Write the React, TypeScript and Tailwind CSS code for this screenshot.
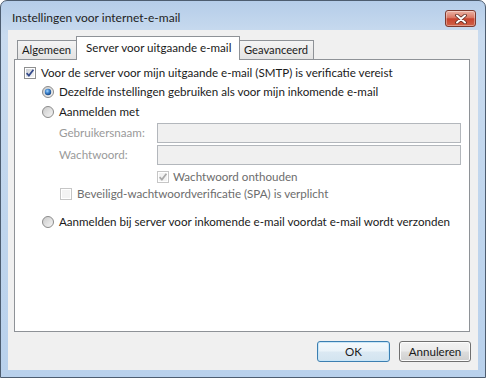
import React from "react";

function Defs() {
  return (
    <svg width="0" height="0" className="absolute">
      <defs>
        <linearGradient id="cbInner" x1="0" y1="0" x2="1" y2="1">
          <stop offset="0" stopColor="#cbcfd5" />
          <stop offset="1" stopColor="#f6f6f6" />
        </linearGradient>
        <linearGradient id="rbBg" x1="0" y1="0" x2="1" y2="1">
          <stop offset="0" stopColor="#c9c9c9" />
          <stop offset="1" stopColor="#f7f7f7" />
        </linearGradient>
        <radialGradient id="rbDot" cx="0.4" cy="0.35" r="0.7">
          <stop offset="0" stopColor="#a8d8ff" />
          <stop offset="0.45" stopColor="#3f86d0" />
          <stop offset="1" stopColor="#123d78" />
        </radialGradient>
      </defs>
    </svg>
  );
}

function CheckBox({ checked, disabled }: { checked?: boolean; disabled?: boolean }) {
  return (
    <svg width="12" height="12" viewBox="0 0 12 12" className="shrink-0">
      <rect x="0.5" y="0.5" width="11" height="11" fill="#fff" stroke={disabled ? "#c6c6c6" : "#8e8f8f"} />
      <rect x="2" y="2" width="8" height="8" fill={disabled ? "#f3f3f3" : "url(#cbInner)"} />
      {checked && (
        <path
          d="M2.6 6.2 L4.9 8.6 L9.4 2.8"
          fill="none"
          stroke={disabled ? "#a9a9a9" : "#33498a"}
          strokeWidth="1.7"
        />
      )}
    </svg>
  );
}

function Radio({ selected }: { selected?: boolean }) {
  return (
    <svg width="12" height="12" viewBox="0 0 12 12" className="shrink-0">
      <circle cx="6" cy="6" r="5.5" fill="url(#rbBg)" stroke="#8b8b8b" strokeWidth="1" />
      {selected && <circle cx="6" cy="6" r="3.2" fill="url(#rbDot)" />}
    </svg>
  );
}

export default function App() {
  return (
    <div className="w-[486px] h-[378px] bg-white font-['Lato','Noto_Sans',sans-serif] text-[11.6px] text-[#1a1a1a]">
      <Defs />
      <div className="w-[486px] h-[378px] rounded-t-[7px] border border-[#4d5d70] bg-[linear-gradient(180deg,#b5cde9_0%,#c9dbef_9%,#bfd5ed_60%,#b9d1ec_100%)] flex flex-col">
        {/* Title bar */}
        <div className="h-[29px] flex items-start justify-between">
          <div className="pl-[11px] pt-[9px] leading-[16px] text-[12px] text-[#1e1e1e]">
            Instellingen voor internet-e-mail
          </div>
          <div className="mt-[9px] mr-[9px] w-[31px] h-[17px] rounded-[3px] border border-[#7c3a2f] bg-[linear-gradient(180deg,#ecb3a5_0%,#d97763_45%,#c7432e_52%,#d06248_100%)] flex items-center justify-center shadow-[inset_0_0_0_1px_rgba(255,255,255,0.35)]">
            <svg width="12" height="10" viewBox="0 0 12 10">
              <path d="M2 1.5 L10 8.5 M10 1.5 L2 8.5" stroke="#5a2a22" strokeWidth="3.6" strokeLinecap="round" />
              <path d="M2 1.5 L10 8.5 M10 1.5 L2 8.5" stroke="#ffffff" strokeWidth="2" strokeLinecap="round" />
            </svg>
          </div>
        </div>

        {/* Client area */}
        <div className="flex-1 mx-[7px] mb-[7px] bg-[#f0f0f0] flex flex-col pt-[6px]">
          <div className="pl-[6px] pr-[8px]">
            {/* Tabs */}
            <div className="flex items-end h-[23px] relative z-10 pl-[3px] text-[11.2px]">
              <div className="w-[60px] h-[19px] border border-b-0 border-[#8e9297] bg-[linear-gradient(180deg,#f4f4f4,#e3e3e3)] pl-[4px] leading-[18px] whitespace-nowrap">
                Algemeen
              </div>
              <div className="w-[164px] h-[24px] -ml-[1px] -mb-[1px] border border-b-0 border-[#8e9297] bg-white pl-[9px] leading-[21px] text-[11.6px] whitespace-nowrap">
                Server voor uitgaande e-mail
              </div>
              <div className="w-[74px] h-[19px] border border-l-0 border-b-0 border-[#8e9297] bg-[linear-gradient(180deg,#f4f4f4,#e3e3e3)] pl-[4px] leading-[18px] whitespace-nowrap">
                Geavanceerd
              </div>
            </div>
            {/* Panel */}
            <div className="h-[273px] border border-[#8e9297] bg-white flex flex-col">
              <div className="mt-[4px] h-[18px] pl-[9px] flex items-center gap-[5px]">
                <CheckBox checked />
                <span>Voor de server voor mijn uitgaande e-mail (SMTP) is verificatie vereist</span>
              </div>
              <div className="h-[20px] pl-[27px] flex items-center gap-[5px]">
                <Radio selected />
                <span>Dezelfde instellingen gebruiken als voor mijn inkomende e-mail</span>
              </div>
              <div className="h-[20px] pl-[27px] flex items-center gap-[5px]">
                <Radio />
                <span>Aanmelden met</span>
              </div>
              <div className="mt-[1px] h-[20px] pl-[44px] pr-[8px] flex items-center">
                <span className="w-[98px] text-[#9a9a9a]">Gebruikersnaam:</span>
                <div className="flex-1 h-[20px] border border-[#b3b7bc] bg-[#f0f0f0]" />
              </div>
              <div className="mt-[2px] h-[20px] pl-[44px] pr-[8px] flex items-center">
                <span className="w-[98px] text-[#9a9a9a]">Wachtwoord:</span>
                <div className="flex-1 h-[20px] border border-[#b3b7bc] bg-[#f0f0f0]" />
              </div>
              <div className="mt-[3px] h-[18px] pl-[142px] flex items-center gap-[4px] text-[#6d6d6d]">
                <CheckBox checked disabled />
                <span>Wachtwoord onthouden</span>
              </div>
              <div className="h-[16px] pl-[45px] flex items-center gap-[5px] text-[#6d6d6d]">
                <CheckBox disabled />
                <span>Beveiligd-wachtwoordverificatie (SPA) is verplicht</span>
              </div>
              <div className="mt-[10px] h-[20px] pl-[27px] flex items-center gap-[5px]">
                <Radio />
                <span>Aanmelden bij server voor inkomende e-mail voordat e-mail wordt verzonden</span>
              </div>
            </div>
          </div>
          {/* Buttons */}
          <div className="mt-[9px] pr-[7px] flex justify-end gap-[9px]">
            <button className="w-[73px] h-[21px] rounded-[3px] border border-[#3c7fb1] bg-[linear-gradient(180deg,#f4f9fc_0%,#eaf3f9_48%,#dbe9f3_52%,#d3e4f0_100%)] shadow-[inset_0_0_0_1px_#c8e6f8] text-[#1a1a1a] leading-[19px]">
              OK
            </button>
            <button className="w-[72px] h-[21px] rounded-[3px] border border-[#707070] bg-[linear-gradient(180deg,#f2f2f2_0%,#ebebeb_48%,#dddddd_52%,#cfcfcf_100%)] shadow-[inset_0_0_0_1px_#fcfcfc] text-[#1a1a1a] leading-[19px]">
              Annuleren
            </button>
          </div>
        </div>
      </div>
    </div>
  );
}
